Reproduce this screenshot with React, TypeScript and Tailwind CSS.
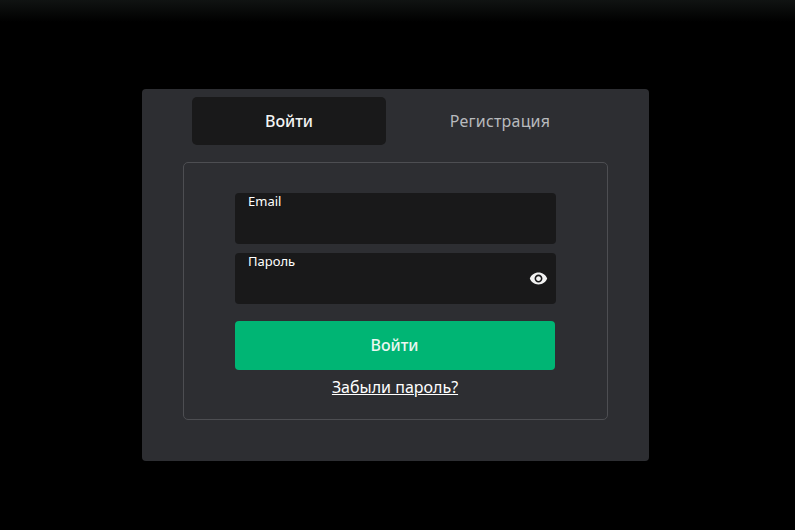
export default function App() {
  const font = "font-['Noto_Sans',sans-serif]";
  return (
    <div className={`${font} w-[795px] h-[530px] overflow-hidden bg-black bg-[linear-gradient(to_bottom,#101312_0px,#000000_22px)] flex flex-col items-start pl-[142px] pt-[89px]`}>
      <div className="w-[507px] h-[372px] rounded-[4px] bg-[#2d2e32] pt-[8px] px-[41px] flex flex-col">
        <div className="flex pl-[9px] h-[48px]">
          <button className="shrink-0 w-[194px] h-[48px] pb-[1px] rounded-[5px] bg-[#19191a] text-[#f4f4f4] text-[16px] font-medium flex items-center justify-center">
            Войти
          </button>
          <button className="shrink-0 w-[228px] h-[48px] pb-[1px] text-[#b8babd] text-[16px] tracking-[0.2px] flex items-center justify-center">
            Регистрация
          </button>
        </div>
        <div className="mt-[17px] h-[258px] rounded-[5px] border border-[#4d4e52] pt-[30px] px-[51px] flex flex-col">
          <div className="w-[321px] h-[51px] rounded-[4px] bg-[#19191a] pl-[13px] text-white text-[13px] leading-[16px]">
            Email
          </div>
          <div className="mt-[9px] w-[321px] h-[51px] rounded-[4px] bg-[#19191a] pl-[13px] pr-[8px] text-white text-[13px] leading-[16px] flex justify-between">
            <span>Пароль</span>
            <svg viewBox="0 0 24 24" className="w-[19px] h-[19px] mt-[16px]" fill="#f2f2f2">
              <path d="M12 4.5C7 4.5 2.73 7.61 1 12c1.73 4.39 6 7.5 11 7.5s9.27-3.11 11-7.5c-1.73-4.39-6-7.5-11-7.5zM12 17c-2.76 0-5-2.24-5-5s2.24-5 5-5 5 2.24 5 5-2.24 5-5 5zm0-8c-1.66 0-3 1.34-3 3s1.34 3 3 3 3-1.34 3-3-1.34-3-3-3z" />
            </svg>
          </div>
          <button className="mt-[17px] w-[320px] h-[49px] pb-[2px] pr-[1px] rounded-[4px] bg-[#00b574] text-[#ecf7f2] text-[16px] font-medium flex items-center justify-center">
            Войти
          </button>
          <a className="mt-[6px] w-[320px] text-center text-white text-[16px] leading-[22px] underline">
            Забыли пароль?
          </a>
        </div>
      </div>
    </div>
  );
}
